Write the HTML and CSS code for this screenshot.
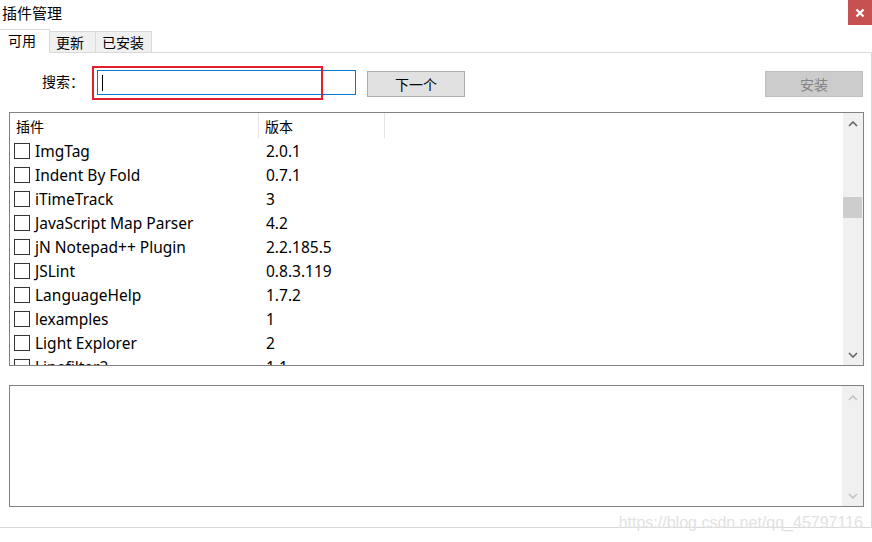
FILE: index.html
```html
<!DOCTYPE html>
<html>
<head>
<meta charset="utf-8">
<link rel="stylesheet" href="styles.css">
</head>
<body>
<div class="window">
  <div class="titlebar">
    <span class="title">插件管理</span>
    <span class="close"><svg width="10" height="10" viewBox="0 0 10 10"><path d="M1.5 1.5 L8.5 8.5 M8.5 1.5 L1.5 8.5" stroke="#fff" stroke-width="2.2"/></svg></span>
  </div>
  <div class="tabs">
    <span class="tab active">可用</span>
    <span class="tab">更新</span>
    <span class="tab">已安装</span>
  </div>
  <div class="panel">
    <div class="searchrow">
      <span class="label">搜索：</span>
      <span class="inputwrap">
        <span class="input"><span class="caret"></span></span>
        <span class="highlight"></span>
      </span>
      <span class="btn">下一个</span>
      <span class="spacer"></span>
      <span class="btn disabled">安装</span>
    </div>
    <div class="list">
      <div class="listbody">
        <div class="header">
          <span class="col1">插件</span>
          <span class="col2">版本</span>
          <span class="col3"></span>
        </div>
        <div class="rows">
          <div class="row"><span class="col1"><span class="cb"></span>ImgTag</span><span class="col2">2.0.1</span></div>
          <div class="row"><span class="col1"><span class="cb"></span>Indent By Fold</span><span class="col2">0.7.1</span></div>
          <div class="row"><span class="col1"><span class="cb"></span>iTimeTrack</span><span class="col2">3</span></div>
          <div class="row"><span class="col1"><span class="cb"></span>JavaScript Map Parser</span><span class="col2">4.2</span></div>
          <div class="row"><span class="col1"><span class="cb"></span>jN Notepad++ Plugin</span><span class="col2">2.2.185.5</span></div>
          <div class="row"><span class="col1"><span class="cb"></span>JSLint</span><span class="col2">0.8.3.119</span></div>
          <div class="row"><span class="col1"><span class="cb"></span>LanguageHelp</span><span class="col2">1.7.2</span></div>
          <div class="row"><span class="col1"><span class="cb"></span>lexamples</span><span class="col2">1</span></div>
          <div class="row"><span class="col1"><span class="cb"></span>Light Explorer</span><span class="col2">2</span></div>
          <div class="row"><span class="col1"><span class="cb"></span>Linefilter2</span><span class="col2">1.1</span></div>
        </div>
      </div>
      <div class="scrollbar">
        <svg class="arrow" width="10" height="6" viewBox="0 0 10 6"><path d="M1 5 L5 1 L9 5" fill="none" stroke="#606060" stroke-width="1.5"/></svg>
        <div class="track"><div class="thumb"></div></div>
        <svg class="arrow" width="10" height="6" viewBox="0 0 10 6"><path d="M1 1 L5 5 L9 1" fill="none" stroke="#606060" stroke-width="1.5"/></svg>
      </div>
    </div>
    <div class="desc">
      <div class="descbody"></div>
      <div class="scrollbar dim">
        <svg class="arrow" width="10" height="6" viewBox="0 0 10 6"><path d="M1 5 L5 1 L9 5" fill="none" stroke="#c0c0c0" stroke-width="1.5"/></svg>
        <div class="track"></div>
        <svg class="arrow" width="10" height="6" viewBox="0 0 10 6"><path d="M1 1 L5 5 L9 1" fill="none" stroke="#c0c0c0" stroke-width="1.5"/></svg>
      </div>
    </div>
    <span class="watermark">https://blog.csdn.net/qq_45797116</span>
  </div>
</div>
</body>
</html>
```
FILE: styles.css
```css
* { box-sizing: border-box; }
html, body { margin: 0; padding: 0; background: #fff; }
body {
  width: 872px;
  height: 542px;
  overflow: hidden;
  font-family: "Noto Sans", "Noto Sans CJK SC", sans-serif;
  font-size: 15px;
  color: #000;
}
.window { display: flex; flex-direction: column; height: 542px; }
.titlebar {
  height: 27px;
  display: flex;
  align-items: flex-start;
  justify-content: space-between;
}
.title {
  font-family: "Noto Sans CJK SC", sans-serif;
  font-size: 15px;
  line-height: 26px;
  padding-left: 2px;
}
.close {
  width: 24px;
  height: 25px;
  background: #c75050;
  display: flex;
  align-items: center;
  justify-content: center;
}
.tabs {
  display: flex;
  align-items: flex-end;
  height: 26px;
  position: relative;
  z-index: 1;
  margin-bottom: -1px;
}
.tab {
  font-family: "Noto Sans CJK SC", sans-serif;
  font-size: 14px;
  height: 22px;
  line-height: 20px;
  padding: 0 6px;
  background: #f0f0f0;
  border: 1px solid #d9d9d9;
  border-left: none;
}
.tab.active {
  background: #fff;
  height: 24px;
  line-height: 21px;
  width: 50px;
  padding: 0 0 0 8px;
  border-bottom-color: #fff;
}
.tab:nth-child(2) { width: 46px; }
.tab:nth-child(3) { width: 56px; }
.panel {
  position: relative;
  width: 872px;
  height: 476px;
  border: 1px solid #d9d9d9;
  border-left: none;
  padding: 17px 7px 0 9px;
  display: flex;
  flex-direction: column;
}
.searchrow {
  display: flex;
  align-items: center;
  height: 28px;
}
.label {
  font-family: "Noto Sans CJK SC", sans-serif;
  font-size: 14px;
  width: 88px;
  padding-left: 33px;
  margin-top: -7px;
}
.inputwrap { position: relative; display: flex; }
.input {
  width: 259px;
  height: 25px;
  border: 1px solid #0078d7;
  display: flex;
  align-items: center;
  padding-left: 4px;
  margin-top: -3px;
}
.caret { width: 1px; height: 16px; background: #000; }
.highlight {
  position: absolute;
  left: -5px;
  top: -7px;
  width: 231px;
  height: 34px;
  border: 2px solid #e0202a;
}
.btn {
  font-family: "Noto Sans CJK SC", sans-serif;
  font-size: 14px;
  width: 98px;
  height: 26px;
  margin-left: 11px;
  background: #e1e1e1;
  border: 1px solid #adadad;
  display: flex;
  align-items: center;
  justify-content: center;
}
.spacer { flex: 1; }
.btn.disabled {
  background: #cccccc;
  border-color: #bfbfbf;
  color: #838383;
  margin-left: 0;
  margin-right: 1px;
}
.list {
  margin-top: 14px;
  height: 254px;
  border: 1px solid #828282;
  display: flex;
  overflow: hidden;
}
.listbody { flex: 1; overflow: hidden; }
.header {
  display: flex;
  height: 25px;
  font-family: "Noto Sans CJK SC", sans-serif;
  font-size: 14px;
}
.header .col1, .header .col2 { border-right: 1px solid #e5e5e5; }
.header span { display: flex; align-items: center; }
.col1 { width: 249px; padding-left: 6px; display: flex; align-items: center; }
.col2 { width: 126px; padding-left: 6px; }
.col3 { flex: 1; }
.rows { padding-top: 1px; }
.row {
  display: flex;
  height: 24px;
  align-items: center;
  font-size: 15.5px;
}
.row .col1 { padding-left: 4px; }
.row .col2 { padding-left: 7px; }
.cb {
  width: 16px;
  height: 16px;
  border: 1px solid #333;
  margin-right: 5px;
  flex: none;
}
.scrollbar {
  width: 20px;
  background: #f0f0f0;
  display: flex;
  flex-direction: column;
  align-items: center;
  padding: 8px 0 7px;
}
.arrow { flex: none; }
.track { flex: 1; width: 100%; padding-top: 70px; }
.thumb { height: 21px; width: 19px; background: #cdcdcd; }
.desc {
  margin-top: 19px;
  height: 122px;
  border: 1px solid #828282;
  display: flex;
}
.descbody { flex: 1; }
.desc .scrollbar { width: 21px; padding: 9px 0 7px; }
.watermark {
  position: absolute;
  right: 8px;
  bottom: -5px;
  font-family: "Liberation Sans", sans-serif;
  font-size: 16px;
  color: #e2e2e2;
}
```
